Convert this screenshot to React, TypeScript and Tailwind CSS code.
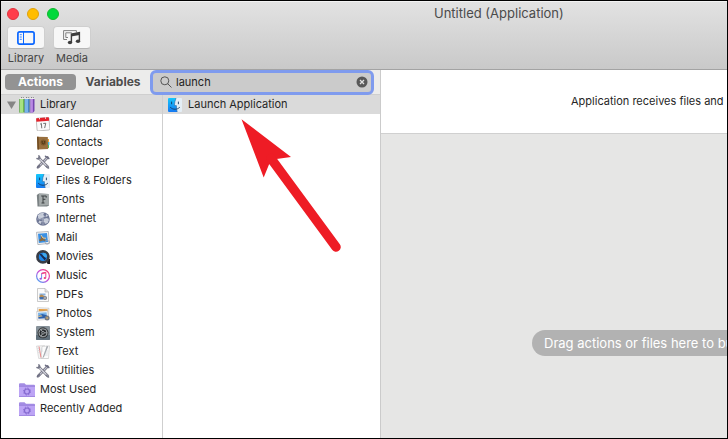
import { useState, type ReactNode } from 'react';

type IconProps = { className?: string };

function FinderIcon({ className = 'size-[14px]' }: IconProps) {
  return (
    <svg viewBox="0 0 14 14" className={className} aria-hidden="true">
      <defs>
        <linearGradient id="finderLeft" x1="0" y1="0" x2="0" y2="1">
          <stop offset="0" stopColor="#15c8fb" />
          <stop offset="1" stopColor="#1478f2" />
        </linearGradient>
      </defs>
      <rect width="14" height="14" rx="1" fill="#e4eef6" />
      <path d="M0 1a1 1 0 0 1 1-1h7C7 2.500 6.500 5 6.400 7.600h2c0 2.400.2 4.400.8 6.400H1a1 1 0 0 1-1-1z" fill="url(#finderLeft)" />
      <path d="M8 0C7 2.500 6.500 5 6.400 7.600h2c0 2.400.2 4.400.8 6.400" fill="none" stroke="#2a6aa5" strokeWidth=".6" />
      <path d="M3.600 4v1.800M10.400 4v1.800M2.500 9.500c2.500 2.400 6.600 2.400 9 0" fill="none" stroke="#123a63" strokeWidth=".9" strokeLinecap="round" />
    </svg>
  );
}

function LibraryIcon() {
  return (
    <svg viewBox="0 0 16 16" className="size-4" aria-hidden="true">
      <path d="M.3 2h5v13.500h-5z" fill="#6fbf4e" />
      <path d="M.3 2H4v13.500H.3z" fill="#a8e283" />
      <path d="M5.600 2h5v13.500h-5z" fill="#3a78c4" />
      <path d="M5.600 2h3.600v13.500H5.600z" fill="#78b4ea" />
      <path d="M10.900 2h4.600v12l-1.300 1.500h-3.300z" fill="#7546b0" />
      <path d="M10.900 2h3v13.500h-3z" fill="#b98ae4" />
      <path d="M.5 2L2 .6h3.500L5 2zM5.800 2L7 .6h3.800L10.200 2zM11 2L12 .6h3.300V2z" fill="#f2f2f2" />
      <path d="M2 .6h3.500M7 .6h3.800M12 .6h3.300" stroke="#6d6d6d" strokeWidth=".9" strokeDasharray="1 .8" />
      <path d="M.3 2v13.500M5.400 2v13.500M10.800 2v13.500" stroke="#4a7d50" strokeWidth=".5" />
    </svg>
  );
}

function CalendarIcon() {
  return (
    <svg viewBox="0 0 14 14" className="size-[14px]" aria-hidden="true">
      <g transform="rotate(-5 7 7)">
        <rect x=".6" y=".8" width="12.800" height="12.700" rx="1" fill="#fafafa" stroke="#9b9b9b" strokeWidth=".6" />
        <path d="M.6 1.600q0-.8.800-.8h11.200q.8 0 .8.800V4.300H.6z" fill="#e3222b" />
        <path d="M4 .5v1.600M10 .5v1.600" stroke="#fff" strokeWidth=".8" />
        <path d="M4.200 7l1.200-.8v5M7.300 6.500H9.800L8.300 11.200" fill="none" stroke="#555" strokeWidth=".8" />
      </g>
    </svg>
  );
}

function ContactsIcon() {
  return (
    <svg viewBox="0 0 14 14" className="size-[14px]" aria-hidden="true">
      <path d="M11 3h2v3h-2z" fill="#e9a33a" />
      <path d="M11 6h2.400v3H11z" fill="#40b8e0" />
      <path d="M11 9h2v3h-2z" fill="#55bd52" />
      <path d="M1 .800l10.800.3.400 12L1.500 13.500z" fill="#99703f" />
      <path d="M1 .800h1.600l.4 12.600-1.500.1z" fill="#704b21" />
      <circle cx="7.400" cy="6.500" r="2.900" fill="#7d592b" />
      <path d="M6.200 5v1.500q0 1.400 1.200 1.400t1.200-1.400V5" fill="none" stroke="#4b3214" strokeWidth=".9" />
    </svg>
  );
}

function ToolsIcon() {
  return (
    <svg viewBox="0 0 14 14" className="size-[14px]" aria-hidden="true">
      <g fill="none" strokeLinecap="round">
        <path d="M2.200 12L11.500 2.500" stroke="#6b6b78" strokeWidth="2.600" />
        <path d="M2.200 12L11.500 2.500" stroke="#c0c1cf" strokeWidth="1.200" />
        <path d="M3 3.200l8.800 8.800" stroke="#6b6b78" strokeWidth="2.600" />
        <path d="M3 3.200l8.800 8.800" stroke="#d5d6e0" strokeWidth="1.300" />
        <path d="M1 3.600q1.900.700 2.500-.4T2.800.9M10.200 11.200l2.300 1.800" stroke="#777989" strokeWidth="1.500" />
        <path d="M9.500 1.300l3.300 2.200M1.400 12.700l2-2" stroke="#6d6e83" strokeWidth="1.600" />
      </g>
    </svg>
  );
}

function FontsIcon() {
  return (
    <svg viewBox="0 0 14 14" className="size-[14px]" aria-hidden="true">
      <path d="M.8 2L3 .5l9.500.5.500 11.500-2 1H1.500z" fill="#7b8284" />
      <path d="M3 .5l9.500.5.500 11-9.800.7z" fill="#a5abab" />
      <path d="M5.200 3h5v1.700M7 3v7M7 6.300h2.400M5.500 10h3" fill="none" stroke="#3c4143" strokeWidth="1" />
    </svg>
  );
}

function InternetIcon() {
  return (
    <svg viewBox="0 0 14 14" className="size-[14px]" aria-hidden="true">
      <circle cx="7" cy="7" r="6.800" fill="#6e7795" />
      <path d="M2 3q3-3 6-2l-1 2 1.500 1L6 6 3.500 7 2 6zM8 7l3-1 2 2-1.500 3L9 12 8 9.500zM3 8.500l2.500 1L5 12 3 11zM10 2l2 2-2 .7z" fill="#c3c9d6" />
      <path d="M.8 7h12.400M7 .5v13M2 3.500q5 3 10 0M2 10.500q5-3 10 0" fill="none" stroke="#e0e4ee" strokeWidth=".4" />
    </svg>
  );
}

function MailIcon() {
  return (
    <svg viewBox="0 0 14 14" className="size-[14px]" aria-hidden="true">
      <path d="M.5 1.300L12.300.5l1.200 11.800-11.600 1.300z" fill="#f6f6f6" stroke="#a4a8b0" strokeWidth=".8" />
      <path d="M2 2.700l9-.6 1 8.900-9.200 1z" fill="#3a90e4" />
      <path d="M3 9l2-1.700L4.500 3.500l3 3 3 .5-2 1.500 1.500 2-3-1-3 .9z" fill="#8a6a3e" />
      <path d="M5 4l2 3 3 .3" stroke="#efe8d4" strokeWidth=".8" fill="none" />
      <circle cx="11.200" cy="11.300" r="2" fill="none" stroke="#9a9ea6" strokeWidth=".7" />
    </svg>
  );
}

function MoviesIcon() {
  return (
    <svg viewBox="0 0 14 14" className="size-[14px]" aria-hidden="true">
      <path d="M9.500 9H14v5h-2.500z" fill="#1c1d20" />
      <circle cx="6.900" cy="6.900" r="6.800" fill="#3a3d45" />
      <circle cx="6.900" cy="6.900" r="4.100" fill="#1f86e9" />
      <path d="M6.900 2.800v4.100H11a4.100 4.100 0 0 0-4.100-4.100" fill="#3ea8ee" />
      <path d="M3.600 4.500l5 5.800 1.600-1.600-5.300-5.200z" fill="#1a2a50" />
    </svg>
  );
}

function MusicIcon() {
  return (
    <svg viewBox="0 0 14 14" className="size-[14px]" aria-hidden="true">
      <defs>
        <linearGradient id="music" x1="1" y1="0" x2="0" y2="1">
          <stop offset="0" stopColor="#fb3c62" />
          <stop offset=".5" stopColor="#c949d8" />
          <stop offset="1" stopColor="#36b5fa" />
        </linearGradient>
      </defs>
      <circle cx="7" cy="7" r="6.400" fill="#fff" stroke="url(#music)" strokeWidth="1.200" />
      <path d="M5.600 9.600V4.200L9.800 3.300v5.400" fill="none" stroke="url(#music)" strokeWidth="1" />
      <path d="M5.600 4.600l4.200-.9" stroke="#f04a86" strokeWidth="1.300" />
      <ellipse cx="4.700" cy="9.700" rx="1.300" ry="1" fill="#a352e0" />
      <ellipse cx="8.900" cy="8.900" rx="1.300" ry="1" fill="#e8457f" />
    </svg>
  );
}

function PdfIcon() {
  return (
    <svg viewBox="0 0 14 14" className="size-[14px]" aria-hidden="true">
      <path d="M1.500.5h7.500l3.500 3.500v9.500h-11z" fill="#fbfbfb" stroke="#b4b4b4" strokeWidth=".7" />
      <path d="M9 .5V4h3.500" fill="#dedede" stroke="#b4b4b4" strokeWidth=".6" />
      <path d="M3.500 5.500h6v2h-6z" fill="#86aedb" />
      <path d="M3.500 7.500l2-1 3 1.500v2h-5z" fill="#b58c55" />
      <path d="M3.500 9h4v2.500h-4z" fill="#3f6faf" />
      <circle cx="9" cy="10" r="2.100" fill="#7d8087" />
      <circle cx="9" cy="10" r=".9" fill="#b9bcc4" />
    </svg>
  );
}

function PhotosIcon() {
  return (
    <svg viewBox="0 0 14 14" className="size-[14px]" aria-hidden="true">
      <path d="M1.500.7l11.500.5-.5 8-11-.5z" fill="#f6f6f6" stroke="#adadad" strokeWidth=".5" />
      <path d="M2.700 1.900l9 .4-.2 3-8.800-.5z" fill="#e69b3b" />
      <path d="M.7 4.500l11-.7.800 8.500-11.300.9z" fill="#fafafa" stroke="#adadad" strokeWidth=".5" />
      <path d="M2 5.700l8.600-.5.300 3-8.700.5z" fill="#7cb5e9" />
      <path d="M2.200 8.700l4-1.700 4.700 1.200.2 3-8.700.6z" fill="#2d61ac" />
      <path d="M2.200 9l3-.7 1.500 1-4.400.8z" fill="#eacb87" />
      <circle cx="11.100" cy="11" r="2.500" fill="#767b85" />
      <circle cx="11.100" cy="11" r="1.100" fill="#c4a36c" />
    </svg>
  );
}

function SystemIcon() {
  return (
    <svg viewBox="0 0 14 14" className="size-[14px]" aria-hidden="true">
      <rect width="14" height="14" rx="1" fill="#87929a" />
      <path d="M0 9h14v4q0 1-1 1H1q-1 0-1-1z" fill="#5f6e79" />
      <circle cx="7" cy="6.800" r="5.500" fill="#26292c" />
      <circle cx="7" cy="6.800" r="4" fill="none" stroke="#b0b5b8" strokeWidth=".9" />
      <circle cx="7" cy="6.800" r="4.700" fill="none" stroke="#8a8f92" strokeWidth=".7" strokeDasharray=".7 .7" />
      <circle cx="7" cy="6.800" r="1.300" fill="none" stroke="#b0b5b8" strokeWidth=".8" />
      <path d="M8.300 6.800h2.700M6.300 8l-1.400 2.200M6.300 5.600L4.900 3.400" stroke="#b0b5b8" strokeWidth=".9" />
    </svg>
  );
}

function TextIcon() {
  return (
    <svg viewBox="0 0 14 14" className="size-[14px]" aria-hidden="true">
      <path d="M.5 1l8-.5L12 13.500H2.700z" fill="#f3f3f3" stroke="#c4c4c4" strokeWidth=".5" />
      <path d="M6 1.500l7.500-.7-1 12.700H5z" fill="#fcfcfc" stroke="#bababa" strokeWidth=".5" />
      <path d="M3 1.500l2 11" stroke="#ea8888" strokeWidth="1" />
      <path d="M10.800.8L7 11.500l-.7 2 1.700-1.600L12.200 1.400z" fill="#a5a9ae" />
      <path d="M1.500 3.500h2M2 5.500h2M2.400 7.500h2M4.500 4h2M5 6h2M9.500 6h2.700M9 8h3M8.500 10h3.300" stroke="#c7cbd0" strokeWidth=".5" />
    </svg>
  );
}

function SmartFolderIcon() {
  return (
    <svg viewBox="0 0 16 14" className="h-[14px] w-4" aria-hidden="true">
      <path d="M0 1.300Q0 .3 1 .3h4.500L7 1.700h8q1 0 1 1V13q0 1-1 1H1q-1 0-1-1z" fill="#a48de4" />
      <path d="M0 3.600h16V13q0 1-1 1H1q-1 0-1-1z" fill="#bca4f5" />
      <path d="M0 3.400h16M0 13.500h16" stroke="#9b82dc" strokeWidth=".8" />
      <circle cx="8" cy="8.500" r="2.500" fill="none" stroke="#8469cf" strokeWidth="1.200" />
      <circle cx="8" cy="8.500" r="3.500" fill="none" stroke="#8469cf" strokeWidth="1" strokeDasharray="1.370 1.370" />
    </svg>
  );
}

function PanelIcon() {
  return (
    <svg viewBox="0 0 18 14" className="h-[14px] w-[18px]" fill="none" stroke="#0a66ff" aria-hidden="true">
      <rect x=".9" y=".9" width="16.200" height="12.200" rx="1.800" strokeWidth="1.700" />
      <path d="M6.500 1v12" strokeWidth="1" />
      <path d="M2.800 3.700h2M2.800 6h2M2.800 8.300h2" strokeWidth=".8" />
    </svg>
  );
}

function MediaIcon() {
  return (
    <svg viewBox="0 0 18 15" className="h-[15px] w-[18px]" fill="none" aria-hidden="true">
      <path d="M4 9.500H.6V.6h12.800v2" stroke="#818181" strokeWidth="1" />
      <path d="M5 7.500H2.800V2.800h6" stroke="#818181" strokeWidth="1" />
      <path d="M8.400 12V4l8-1.500V11" stroke="#3d3d3d" strokeWidth="1.400" />
      <path d="M8 4l8.800-1.500v2.600L8 6.600z" fill="#3d3d3d" />
      <ellipse cx="7" cy="12.500" rx="2.200" ry="1.700" fill="#3d3d3d" />
      <ellipse cx="15" cy="11.200" rx="2.200" ry="1.700" fill="#3d3d3d" />
    </svg>
  );
}

const CATEGORIES: { label: string; icon: ReactNode }[] = [
  { label: 'Calendar', icon: <CalendarIcon /> },
  { label: 'Contacts', icon: <ContactsIcon /> },
  { label: 'Developer', icon: <ToolsIcon /> },
  { label: 'Files & Folders', icon: <FinderIcon /> },
  { label: 'Fonts', icon: <FontsIcon /> },
  { label: 'Internet', icon: <InternetIcon /> },
  { label: 'Mail', icon: <MailIcon /> },
  { label: 'Movies', icon: <MoviesIcon /> },
  { label: 'Music', icon: <MusicIcon /> },
  { label: 'PDFs', icon: <PdfIcon /> },
  { label: 'Photos', icon: <PhotosIcon /> },
  { label: 'System', icon: <SystemIcon /> },
  { label: 'Text', icon: <TextIcon /> },
  { label: 'Utilities', icon: <ToolsIcon /> },
];

const SMART_FOLDERS = ['Most Used', 'Recently Added'];

function ToolbarButton({ label, children }: { label: string; children: ReactNode }) {
  return (
    <button className="flex flex-col items-center gap-px text-[11px] leading-4 text-[#444]">
      <span className="flex h-[23px] w-[38px] items-center justify-center rounded-[4px] border border-[#cfcfcf] border-b-[#b5b5b5] bg-[#f7f7f7]">
        {children}
      </span>
      {label}
    </button>
  );
}

export default function App() {
  const [query, setQuery] = useState('launch');
  const [tab, setTab] = useState<'actions' | 'variables'>('actions');
  const [expanded, setExpanded] = useState(true);

  return (
    <div className="flex h-screen flex-col overflow-hidden border border-black bg-white font-['Inter',sans-serif] text-[11px] text-[#262626]">
      {/* Title bar and toolbar */}
      <header className="shrink-0 border-b border-[#a3a3a3] border-t border-t-[#f3f3f3] bg-linear-to-b from-[#e2e2e2] to-[#c9c9c9] px-[6px] pb-[3px]">
        <div className="flex h-6 items-center">
          <div className="flex gap-2">
            <button aria-label="Close" className="size-3 rounded-full border border-[#e0343f] bg-[#ff3e4b]" />
            <button aria-label="Minimize" className="size-3 rounded-full border border-[#e0a10c] bg-[#ffbd00]" />
            <button aria-label="Zoom" className="size-3 rounded-full border border-[#12b82e] bg-[#00d93c]" />
          </div>
          <h1 className="ml-[375px] text-[13px] whitespace-nowrap text-[#4b4b4b]">Untitled (Application)</h1>
        </div>
        <div className="flex gap-2">
          <ToolbarButton label="Library">
            <PanelIcon />
          </ToolbarButton>
          <ToolbarButton label="Media">
            <MediaIcon />
          </ToolbarButton>
        </div>
      </header>

      <div className="flex min-h-0 flex-1">
        {/* Library browser */}
        <section className="flex w-[380px] shrink-0 flex-col border-r border-[#cbcbcb]">
          <div className="flex h-[25px] items-center border-b border-[#cfcfcf] bg-[#ececeb] pr-[6px] pl-1">
            <button
              onClick={() => setTab('actions')}
              className={`h-4 w-[71px] rounded-[4px] text-xs leading-4 font-bold ${
                tab === 'actions' ? 'bg-[#939393] text-white' : 'text-[#4d4d4d]'
              }`}
            >
              Actions
            </button>
            <button
              onClick={() => setTab('variables')}
              className={`h-4 w-[74px] rounded-[4px] text-xs leading-4 font-bold ${
                tab === 'variables' ? 'bg-[#939393] text-white' : 'text-[#4d4d4d]'
              }`}
            >
              Variables
            </button>
            <label className="z-10 flex h-[25px] min-w-0 flex-1 items-center rounded-md border-[3px] border-[#7f9bee] bg-[#cbcbcb] px-[7px]">
              <svg viewBox="0 0 12 12" className="size-3 shrink-0" fill="none" stroke="#555" aria-hidden="true">
                <circle cx="4.800" cy="4.800" r="4" />
                <path d="M7.800 7.800l3.400 3.400" strokeLinecap="round" />
              </svg>
              <input
                type="text"
                aria-label="Search actions"
                value={query}
                onChange={(e) => setQuery(e.target.value)}
                className="ml-1 min-w-0 flex-1 bg-transparent text-[#222] outline-none"
              />
              <button aria-label="Clear search" onClick={() => setQuery('')} className="-mr-1 shrink-0">
                <svg viewBox="0 0 12 12" className="size-3" aria-hidden="true">
                  <circle cx="6" cy="6" r="5.500" fill="#585858" />
                  <path d="M4 4l4 4M8 4L4 8" stroke="#e0e0e0" strokeWidth="1.300" />
                </svg>
              </button>
            </label>
          </div>

          <div className="flex min-h-0 flex-1">
            <nav className="w-[162px] shrink-0 border-r border-[#cfcfcf]">
              <button
                aria-expanded={expanded}
                onClick={() => setExpanded(!expanded)}
                className="flex h-[19px] w-full items-center bg-[#dadada] pl-[6px]"
              >
                <svg viewBox="0 0 9 8" className="mr-[3px] h-2 w-[9px]" aria-hidden="true">
                  <path d="M0 .5h9L4.500 8z" fill="#858585" />
                </svg>
                <LibraryIcon />
                <span className="ml-[5px]">Library</span>
              </button>
              {expanded && (
                <ul>
                  {CATEGORIES.map(({ label, icon }) => (
                    <li key={label}>
                      <button className="flex h-[19px] w-full items-center gap-[6px] pl-[35px] whitespace-nowrap">
                        {icon}
                        {label}
                      </button>
                    </li>
                  ))}
                </ul>
              )}
              <ul>
                {SMART_FOLDERS.map((label) => (
                  <li key={label}>
                    <button className="flex h-[19px] w-full items-center gap-[5px] pl-[18px] whitespace-nowrap">
                      <SmartFolderIcon />
                      {label}
                    </button>
                  </li>
                ))}
              </ul>
            </nav>

            <div className="relative flex-1">
              <button className="flex h-[19px] w-full items-center gap-[6px] bg-[#dadada] pl-[5px]">
                <FinderIcon />
                Launch Application
              </button>
              <svg
                viewBox="239 117 104 136"
                className="absolute top-[22px] left-[76px] h-[136px] w-[104px]"
                aria-hidden="true"
              >
                <path d="M241.500 119.300L291 157l-14.500 2L269 164.500l-5.300 13z" fill="#ee1c25" />
                <path d="M271 158.500L336 247" stroke="#ee1c25" strokeWidth="9.500" strokeLinecap="round" />
              </svg>
            </div>
          </div>
        </section>

        {/* Workflow canvas */}
        <main className="flex min-w-0 flex-1 flex-col overflow-hidden">
          <p className="flex h-[63px] shrink-0 items-center pl-[190px] whitespace-nowrap">
            Application receives files and
          </p>
          <div className="flex flex-1 items-center border-t border-[#d0d0d0] bg-[#e6e6e5] pt-[114px] pl-[151px]">
            <p className="h-[26px] flex-1 rounded-l-full bg-[#b2b2b2] pl-3 text-[13px] leading-[26px] whitespace-nowrap text-white">
              Drag actions or files here to bu
            </p>
          </div>
        </main>
      </div>
    </div>
  );
}
